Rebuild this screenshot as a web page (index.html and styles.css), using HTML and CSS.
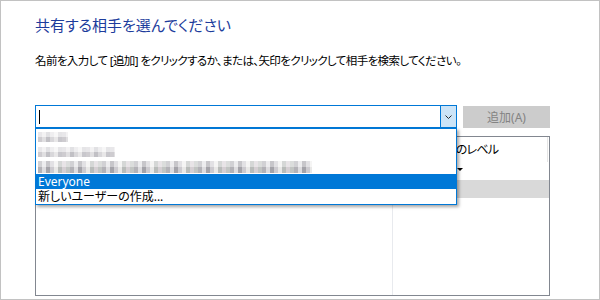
FILE: index.html
```html
<!DOCTYPE html>
<html lang="ja">
<head>
<meta charset="utf-8">
<title>ファイル共有</title>
<link rel="stylesheet" href="styles.css">
</head>
<body>
<div class="window">
  <h1 class="title">共有する相手を選んでください</h1>
  <p class="hint">名前を入力して [追加] をクリックするか、または、矢印をクリックして相手を検索してください。</p>
  <div class="picker">
    <div class="combo">
      <div class="combo-input"><span class="caret"></span></div>
      <div class="combo-btn">
        <svg width="7" height="4" viewBox="0 0 7 4"><polyline points="0.5,0.5 3.5,3.5 6.5,0.5" fill="none" stroke="#2b2b2b" stroke-width="1"/></svg>
      </div>
      <ul class="combo-list">
        <li class="item"><span class="mosaic m1"></span></li>
        <li class="item"><span class="mosaic m2"></span></li>
        <li class="item"><span class="mosaic m3"></span></li>
        <li class="item active">Everyone</li>
        <li class="item">新しいユーザーの作成...</li>
      </ul>
    </div>
    <button class="add" type="button">追加(A)</button>
  </div>
  <div class="table">
    <div class="thead">
      <div class="cell name"></div>
      <div class="cell level">アクセス許可のレベル</div>
    </div>
    <div class="row">
      <div class="cell name"></div>
      <div class="cell level"><span class="arrow"></span></div>
    </div>
    <div class="row selected">
      <div class="cell name"></div>
      <div class="cell level"></div>
    </div>
    <div class="rest">
      <div class="cell name"></div>
      <div class="cell level"></div>
    </div>
  </div>
</div>
</body>
</html>
```

FILE: styles.css
```css
html, body {
  margin: 0;
  padding: 0;
  width: 600px;
  height: 300px;
  background: #ffffff;
  overflow: hidden;
}
body {
  font-family: "Noto Sans", "Noto Sans CJK JP", sans-serif;
  font-feature-settings: "palt";
  color: #000;
}
.window {
  box-sizing: border-box;
  width: 600px;
  height: 300px;
  border: 1px solid #c2c2c2;
  padding: 14px 49px 0 34px;
  display: flex;
  flex-direction: column;
}
.title {
  margin: 0;
  font-weight: normal;
  font-size: 15px;
  line-height: 20px;
  color: #1c3c9c;
}
.hint {
  margin: 18px 0 0;
  font-size: 11.5px;
  letter-spacing: -0.6px;
  line-height: 16px;
  white-space: nowrap;
}
.picker {
  margin-top: 36px;
  display: flex;
  gap: 6px;
  height: 23px;
  position: relative;
  z-index: 2;
}
.combo {
  position: relative;
  box-sizing: border-box;
  width: 422px;
  height: 23px;
  border: 1px solid #0078d7;
  display: flex;
}
.combo-input {
  flex: 1;
  display: flex;
  align-items: center;
  padding-left: 3px;
}
.caret {
  display: block;
  width: 1px;
  height: 14px;
  background: #000;
}
.combo-btn {
  width: 15px;
  border-left: 1px solid #0078d7;
  background: #cce4f7;
  display: flex;
  align-items: center;
  justify-content: center;
}
.combo-btn svg { display: block; }
.combo-list {
  position: absolute;
  left: -1px;
  top: 22px;
  width: 422px;
  box-sizing: border-box;
  margin: 0;
  padding: 0;
  list-style: none;
  border: 1px solid #0078d7;
  background: #fff;
  box-shadow: 2px 2px 3px rgba(0, 0, 0, 0.35);
}
.item {
  height: 15px;
  line-height: 15px;
  font-size: 12px;
  padding-left: 2px;
  white-space: nowrap;
  overflow: hidden;
  display: flex;
  align-items: center;
}
.item.active {
  background: #0078d7;
  color: #fff;
}
.mosaic {
  display: block;
  height: 10px;
  background:
    linear-gradient(to bottom, rgba(255,255,255,0.45) 0 50%, rgba(0,0,0,0.04) 50% 100%),
    repeating-linear-gradient(to right, #d6d4d8 0 4px, #e9e8ea 4px 8px, #c9c8cd 8px 12px, #e1e0e3 12px 16px, #f1f0f1 16px 20px, #d0cfd4 20px 24px);
}
.m1 { width: 30px; }
.m2 { width: 77px; }
.m3 {
  width: 274px;
  height: 12px;
  background:
    linear-gradient(to bottom, rgba(255,255,255,0.35) 0 50%, rgba(0,0,0,0.03) 50% 100%),
    repeating-linear-gradient(to right, #b9b8bd 0 4px, #e4e3e6 4px 8px, #a9a8ae 8px 12px, #d3d1d6 12px 16px, #f0efee 16px 20px, #bfc2c0 20px 24px, #dcd6da 24px 28px, #c8cbc9 28px 32px);
}
.add {
  box-sizing: border-box;
  width: 87px;
  height: 22px;
  margin-top: 1px;
  border: 1px solid #cccccc;
  background: #cccccc;
  color: #838383;
  font-family: inherit;
  font-feature-settings: "palt";
  font-size: 12px;
  padding: 0;
}
.table {
  margin-top: 8px;
  box-sizing: border-box;
  height: 160px;
  border: 1px solid #828790;
  display: flex;
  flex-direction: column;
}
.thead, .row, .rest {
  display: flex;
}
.thead { height: 25px; }
.row { height: 18px; }
.row.selected { background: #d9d9d9; }
.rest { flex: 1; }
.cell {
  font-size: 12px;
  line-height: 18px;
  white-space: nowrap;
}
.cell.name {
  width: 356px;
  border-right: 1px solid #e8eaee;
}
.cell.level {
  flex: 1;
  padding-left: 0;
}
.thead .cell {
  line-height: 25px;
  letter-spacing: -0.8px;
}
.thead .cell.level {
  border-right: 1px solid #e5e5e5;
  margin-right: 1px;
}
.row .cell.level {
  display: flex;
  align-items: center;
  padding-left: 64px;
}
.arrow {
  display: block;
  width: 0;
  height: 0;
  margin-top: -4px;
  border-left: 3px solid transparent;
  border-right: 3px solid transparent;
  border-top: 3px solid #000;
}
```
